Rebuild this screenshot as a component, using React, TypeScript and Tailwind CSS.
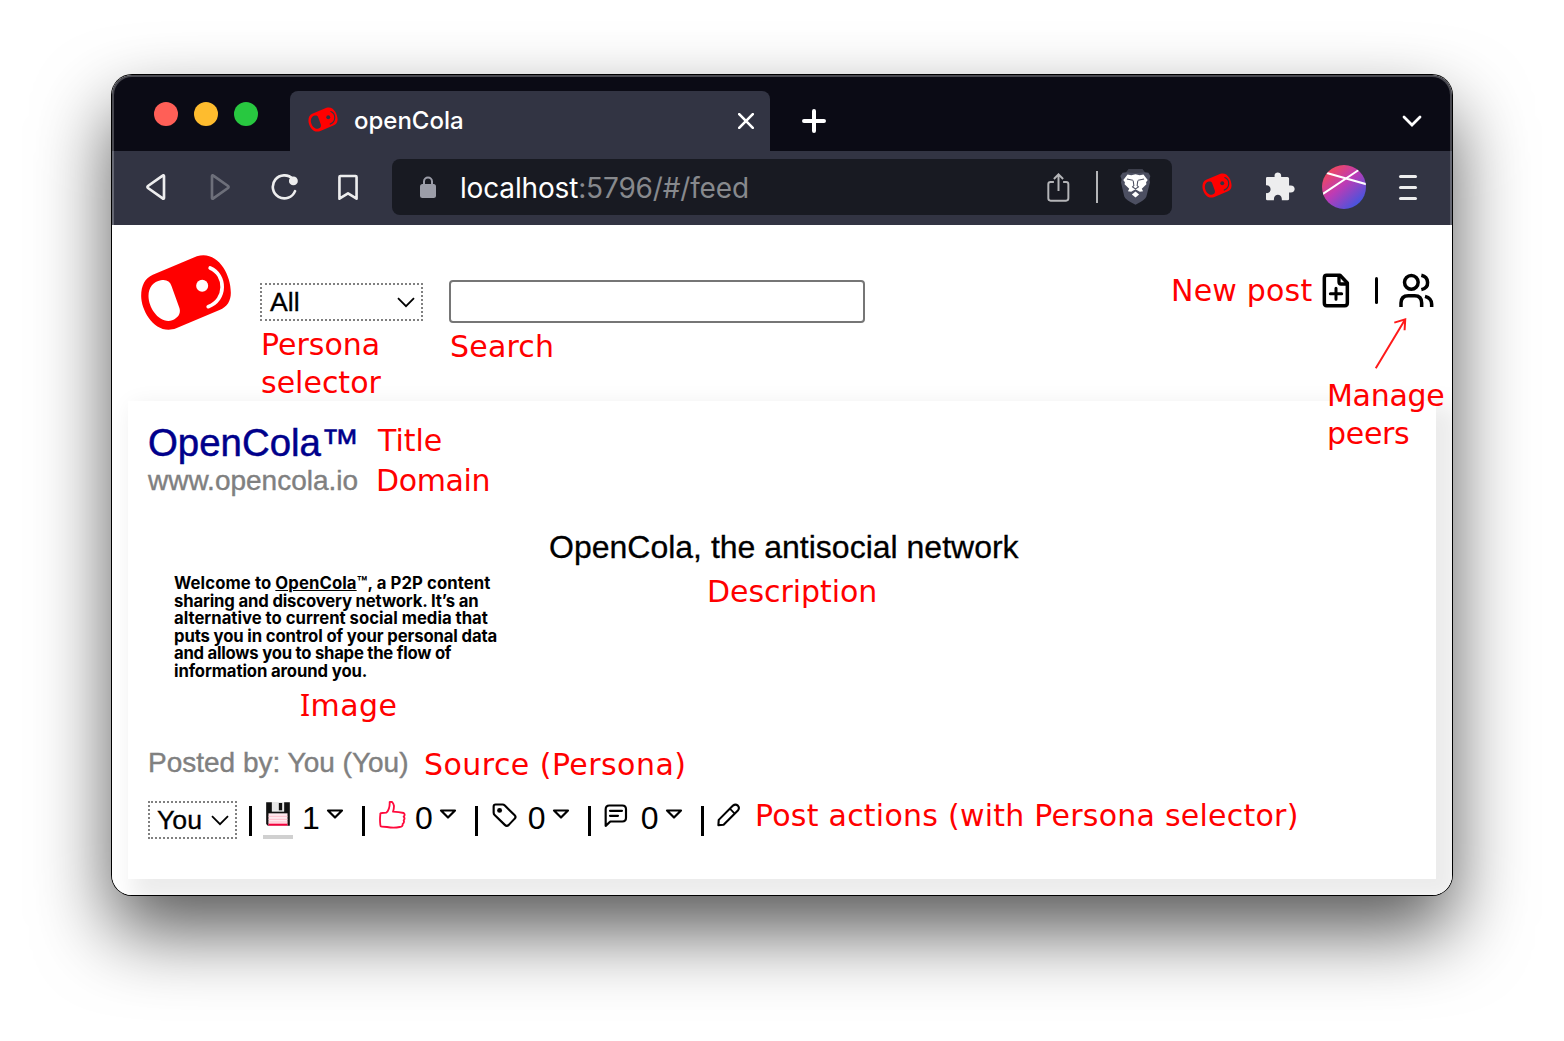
import React from "react";

const SANS = "font-['Liberation_Sans',Arial,sans-serif]";

function CanLogo({ className, hole }: { className: string; hole: string }) {
  return (
    <svg viewBox="60 42 275 231" className={className} aria-label="openCola">
      <path
        d="M98 104L230 49C290 30 332 100 332 158C332 182 322 200 298 210L168 265C108 288 63 215 63 168C63 135 75 114 98 104Z"
        fill="#f00"
      />
      <path
        d="M122 121C139 118 149 124 154 138L178 205C183 222 172 235 156 241C118 252 85 205 85 168C85 142 100 125 122 121Z"
        fill={hole}
      />
      <circle cx="246" cy="137" r="18" fill={hole} />
      <path d="M270 84C318 104 320 180 264 200" fill="none" stroke={hole} strokeWidth="11" strokeLinecap="round" />
    </svg>
  );
}

function Note({ className, children }: { className: string; children: React.ReactNode }) {
  return (
    <div
      className={`absolute whitespace-pre font-['DejaVu_Sans',sans-serif] text-[30px] leading-[38px] text-[#ff0000] ${className}`}
    >
      {children}
    </div>
  );
}

function TabStrip() {
  return (
    <div className="flex h-[76px] items-end bg-[#0b0b15]">
      <div className="mb-[25px] ml-[42px] flex gap-4">
        <span className="size-6 rounded-full bg-[#ff5f57]" />
        <span className="size-6 rounded-full bg-[#febc2e]" />
        <span className="size-6 rounded-full bg-[#28c840]" />
      </div>
      <div className="ml-8 flex h-[60px] w-[480px] items-center rounded-t-lg bg-[#323443] pl-[18px] pr-4">
        <CanLogo className="mt-[-3px] h-[25px] w-[30px]" hole="#323443" />
        <span className="ml-4 font-['Inter',sans-serif] text-[24px] font-medium text-white">openCola</span>
        <svg viewBox="0 0 16 16" className="ml-auto size-4">
          <path d="M1.2 1.2L14.8 14.8M14.8 1.2L1.2 14.8" stroke="#fff" strokeWidth="2.6" strokeLinecap="round" />
        </svg>
      </div>
      <svg viewBox="0 0 24 24" className="mb-[18px] ml-8 size-6">
        <path d="M12 2V22M2 12H22" stroke="#fff" strokeWidth="4" strokeLinecap="round" />
      </svg>
      <svg viewBox="0 0 20 12" className="mb-6 ml-auto mr-[30px] h-3 w-5">
        <path d="M2 2L10 10L18 2" fill="none" stroke="#fff" strokeWidth="2.8" strokeLinecap="round" />
      </svg>
    </div>
  );
}

function LionIcon() {
  return (
    <svg viewBox="301 267 92 109" className="ml-[22px] h-[36px] w-[31px]">
      <path
        d="M327 267H367L375 277L386 278L392 288L389 299L391 307L380 350Q377 360 347 375Q316 360 313 350L303 307L305 299L301 288L308 278L319 277Z"
        fill="#4c4f61"
      />
      <path d="M327 267H367L375 277L347 280L319 277Z" fill="#3d3f4c" />
      <path
        d="M323 284L334 286L347 283L360 286L371 284L384 300L379 307L380 313L366 327L370 334L360 336L347 328L334 336L324 334L328 327L314 313L315 307L310 300Z"
        fill="#fff"
      />
      <path d="M336 344L347 335L358 344L347 353Z" fill="#fff" />
      <path d="M321 297L339 301M373 297L355 301M340 302L342 317L338 321L347 327L356 321L352 317L354 302" fill="none" stroke="#4c4f61" strokeWidth="3.2" />
    </svg>
  );
}

function Toolbar() {
  return (
    <div className="flex h-[74px] items-center bg-[#323443] pb-0.5 pl-[34px]">
      <svg viewBox="140 342 60 78" className="h-[26px] w-5">
        <path d="M190 347Q194 344 194 349V413Q194 418 190 415L146 384Q143 381 146 378Z" fill="none" stroke="#ededee" strokeWidth="8" />
      </svg>
      <svg viewBox="332 342 60 78" className="ml-11 h-[26px] w-5">
        <path d="M342 347Q338 344 338 349V413Q338 418 342 415L386 384Q389 381 386 378Z" fill="none" stroke="#6d6f7a" strokeWidth="8" />
      </svg>
      <svg viewBox="511 340 86 82" className="ml-10 h-[27px] w-[29px]">
        <path d="M579 355A35 35 0 1 0 586 392" fill="none" stroke="#ededee" strokeWidth="8" strokeLinecap="round" />
        <circle cx="581" cy="361" r="13.500" fill="#ededee" />
      </svg>
      <svg viewBox="711 340 66 82" className="ml-[38px] h-[27px] w-[22px]">
        <path d="M721 346H767Q770 346 770 349V415L744 399L718 415V349Q718 346 721 346Z" fill="none" stroke="#ededee" strokeWidth="8" strokeLinejoin="round" />
      </svg>
      <div className="ml-[33px] flex h-14 w-[780px] items-center rounded-lg bg-[#181a22] pl-7">
        <svg viewBox="0 0 16 22" className="h-[22px] w-4">
          <rect x="0" y="8" width="16" height="14" rx="2.500" fill="#9b9da8" />
          <path d="M4 9V5.500a4 4 0 0 1 8 0V9" fill="none" stroke="#9b9da8" strokeWidth="2" />
        </svg>
        <span className="ml-6 mt-px font-['Inter',sans-serif] text-[28px] leading-9 tracking-[-0.160px] text-white">
          localhost<span className="text-[#87898d]">:5796/#/feed</span>
        </span>
        <svg viewBox="79 279 70 88" className="ml-auto h-[29px] w-[23px]">
          <path d="M100 306H90Q83 306 83 313V356Q83 363 90 363H137Q144 363 144 356V313Q144 306 137 306H128" fill="none" stroke="#b4b5b8" strokeWidth="6" />
          <path d="M114 334V284M100 297L114 283L128 297" fill="none" stroke="#b4b5b8" strokeWidth="6" />
        </svg>
        <span className="ml-[26px] h-8 w-0.5 bg-[#b4b5b8]" />
        <LionIcon />
        <span className="w-[21px]" />
      </div>
      <CanLogo className="ml-[30px] mt-[-3px] h-[25px] w-[30px]" hole="#323443" />
      <svg viewBox="738 275 88 88" className="ml-[34px] mt-[-1px] size-[29px]">
        <path
          d="M738 293Q738 290 742 290H764V287C762 273 785 273 784 287V290H803Q808 290 808 295V316H813C829 316 829 337 813 337H808V357Q808 361 803 361H786V357C785 340 763 340 762 357V361H742Q738 361 738 357V339C756 342 757 314 738 315Z"
          fill="#ededee"
        />
      </svg>
      <svg viewBox="906 255 132 132" className="ml-[27px] size-11">
        <defs>
          <linearGradient id="avatar" x1="0.150" y1="0.100" x2="0.850" y2="0.900">
            <stop offset="0" stopColor="#f2495c" />
            <stop offset="0.450" stopColor="#bd3bb5" />
            <stop offset="1" stopColor="#3f56e0" />
          </linearGradient>
          <clipPath id="disc"><circle cx="972" cy="321" r="66" /></clipPath>
        </defs>
        <circle cx="972" cy="321" r="66" fill="url(#avatar)" />
        <path d="M918 278L1040 313M904 345L1016 270" stroke="#fff" strokeWidth="6" clipPath="url(#disc)" />
      </svg>
      <div className="ml-[33px] flex w-[18px] flex-col gap-2">
        <span className="h-[3px] rounded-full bg-[#ededee]" />
        <span className="h-[3px] rounded-full bg-[#ededee]" />
        <span className="h-[3px] rounded-full bg-[#ededee]" />
      </div>
    </div>
  );
}

function Picker({ label, className }: { label: string; className: string }) {
  return (
    <div className={`flex h-[38px] shrink-0 items-center justify-between border-2 border-dotted border-[#808080] text-[26.67px] text-black ${className}`}>
      <span className="[-webkit-text-stroke:0.3px_#000]">{label}</span>
      <svg viewBox="0 0 18 11" className="h-[11px] w-[18px]">
        <path d="M1 1.200L9 9.200L17 1.200" fill="none" stroke="#000" strokeWidth="1.800" />
      </svg>
    </div>
  );
}

function Header() {
  return (
    <div className="flex h-[176px] items-start pl-7 pr-[18px]">
      <CanLogo className="mt-[29px] h-[77px] w-[92px]" hole="#fff" />
      <Picker label="All" className="ml-7 mt-[58px] w-[163px] pl-2 pr-[6px]" />
      <div className="ml-[26px] mt-[55px] h-[43px] w-[416px] rounded-[4px] border-2 border-[#767676] bg-white" />
      <div className="ml-auto mt-12 flex items-center">
        <svg viewBox="486 70 84 105" className="h-[35px] w-7">
          <path d="M500 77H540L562 100V160Q562 168 554 168H500Q493 168 493 160V85Q493 77 500 77Z" fill="none" stroke="#000" strokeWidth="10.500" strokeLinejoin="round" />
          <path d="M537 77V97Q537 103 543 103H562" fill="none" stroke="#000" strokeWidth="10" />
          <path d="M528 116V149M511 132H545" stroke="#000" strokeWidth="9" strokeLinecap="round" />
        </svg>
        <span className="ml-[25px] h-[27px] w-[3px] rounded-full bg-black" />
        <svg viewBox="716 70 105 105" className="ml-[21px] size-[35px]">
          <g fill="none" stroke="#000" strokeWidth="10.500">
            <circle cx="753" cy="98" r="20.500" />
            <path d="M722 172V160Q722 138 744 138H763Q784 138 784 160V172" />
            <path d="M783 77C806 82 810 114 783 120" />
            <path d="M794 140Q814 145 814 164V172" />
          </g>
        </svg>
      </div>
    </div>
  );
}

function Caret() {
  return (
    <svg viewBox="588 206 54 32" className="h-[11px] w-[18px]">
      <path d="M594 210H636L615 231Z" fill="none" stroke="#000" strokeWidth="6.500" strokeLinejoin="round" />
    </svg>
  );
}

function Action({ icon, count }: { icon: React.ReactNode; count: string }) {
  return (
    <div className="flex h-[38px] w-[112.900px] shrink-0 items-start">
      <span className="mt-[5px] h-[30px] w-[3px] bg-black" />
      <span className="ml-[11px] flex w-[30px] justify-center">{icon}</span>
      <span className="ml-[9px] w-[18px] text-[32px] leading-[35px] text-black">{count}</span>
      <span className="ml-[6px] mt-[8px]"><Caret /></span>
    </div>
  );
}

function Disk() {
  return (
    <span className="flex h-[38px] w-[30px] flex-col items-center justify-between border-b-4 border-[#d0d0d0]">
      <svg viewBox="410 185 71 72" className="mt-px h-6 w-6">
        <path d="M410 186H481V256H415L410 251Z" fill="#111" />
        <rect x="427" y="185" width="37" height="29" fill="#e8e8e8" />
        <rect x="448" y="188" width="10" height="22" fill="#111" />
        <rect x="417" y="219" width="57" height="37" fill="#ffe9ee" />
        <path d="M417 228H474M417 237H474M417 245H474" stroke="#ffb6c4" strokeWidth="2.500" />
        <rect x="417" y="250" width="57" height="6" fill="#f5003d" />
      </svg>
    </span>
  );
}

function Thumb() {
  return (
    <svg viewBox="746 181 81 84" className="ml-[3px] h-7 w-[27px] shrink-0">
      <path
        d="M750 221Q749 217 754 217L768 216Q779 206 778 184Q788 180 791 196Q791 204 788 213Q806 214 820 217Q826 222 820 228Q825 234 820 239Q823 246 817 250Q818 258 808 259Q790 263 770 259L754 258Q750 258 750 253Q748 238 750 221Z"
        fill="none" stroke="#ff0a3c" strokeWidth="5.500" strokeLinejoin="round"
      />
    </svg>
  );
}

function Tag() {
  return (
    <svg viewBox="96 187 76 75" className="ml-[2px] mt-0.5 h-[25px] w-[25px]">
      <path d="M107 191H128Q132 191 135 194L165 224Q170 229 165 234L147 253Q141 259 135 253L104 223Q101 220 101 215V197Q101 191 107 191Z" fill="none" stroke="#000" strokeWidth="6.500" strokeLinejoin="round" />
      <circle cx="119" cy="209" r="7.500" fill="#000" />
    </svg>
  );
}

function Comment() {
  return (
    <svg viewBox="432 191 72 71" className="mr-px mt-[3px] h-6 w-6">
      <path d="M437 256V206Q437 195 448 195H487Q498 195 498 206V232Q498 243 487 243H451Z" fill="none" stroke="#000" strokeWidth="6.500" strokeLinejoin="round" />
      <path d="M450 211H486M450 226H474" stroke="#000" strokeWidth="6.500" strokeLinecap="round" />
    </svg>
  );
}

function Card() {
  return (
    <div className="mx-4 flex h-[478px] flex-col items-start bg-white pl-5 pt-5 shadow-[13px_13px_22px_9px_#ececec]">
      <div className="text-[38.400px] leading-[44px] text-[#00008b] [-webkit-text-stroke:0.5px_#00008b]">OpenCola™</div>
      <div className="text-[28px] leading-8 text-[#808080] [-webkit-text-stroke:0.4px_#808080]">www.opencola.io</div>
      <div className="flex h-[250px] items-start">
        <div className="ml-[26px] mt-[78px] w-[375px] whitespace-pre font-['Inter',sans-serif] text-[16.700px] font-bold leading-[17.600px] text-black">
          <div className="tracking-[0.100px]">Welcome to <span className="underline">OpenCola</span>™, a P2P content</div>
          <div className="tracking-[-0.160px]">sharing and discovery network. It’s an</div>
          <div className="tracking-[0px]">alternative to current social media that</div>
          <div className="tracking-[-0.130px]">puts you in control of your personal data</div>
          <div className="tracking-[-0.240px]">and allows you to shape the flow of</div>
          <div className="tracking-[-0.120px]">information around you.</div>
        </div>
        <div className="mt-8 text-[32px] leading-[37px] text-black [-webkit-text-stroke:0.3px_#000]">OpenCola, the antisocial network</div>
      </div>
      <div className="text-[28px] leading-8 text-[#808080] [-webkit-text-stroke:0.4px_#808080]">Posted by: You (You)</div>
      <div className="mt-[22px] flex h-[38px] items-start">
        <Picker label="You" className="w-[89px] pl-[7px] pr-[6px]" />
        <div className="ml-3 flex">
          <Action icon={<Disk />} count="1" />
          <Action icon={<Thumb />} count="0" />
          <Action icon={<Tag />} count="0" />
          <Action icon={<Comment />} count="0" />
          <span className="mt-[5px] h-[30px] w-[3px] bg-black" />
          <svg viewBox="771 190 69 68" className="ml-[13px] mt-0.5 size-6">
            <path d="M775 253L776 238L817 197Q824 191 831 197Q837 204 831 211L790 252Z" fill="none" stroke="#000" strokeWidth="6" strokeLinejoin="round" />
            <path d="M808 206L822 220" stroke="#000" strokeWidth="5" />
          </svg>
        </div>
      </div>
    </div>
  );
}

export default function App() {
  return (
    <div className="relative h-[1041px] w-[1564px] overflow-hidden bg-white pl-28 pt-[75px]">
      <div className="w-[1340px] rounded-[20px] shadow-[0_0_0_1px_#000,0_36px_76px_rgba(0,0,0,0.660)]">
        <div className={`relative h-[820px] overflow-hidden rounded-[20px] bg-white ${SANS}`}>
          <TabStrip />
          <Toolbar />
          <Header />
          <Card />
          <div className="pointer-events-none absolute inset-x-0 top-0 h-[150px] rounded-t-[20px] border-x-2 border-t-2 border-white/25" />
        </div>
      </div>

      <Note className="left-[261px] top-[326px]">{"Persona\nselector"}</Note>
      <Note className="left-[450px] top-[328px] tracking-[0.200px]">Search</Note>
      <Note className="left-[1171px] top-[272px] tracking-[0.200px]">New post</Note>
      <Note className="left-[1327px] top-[377px] tracking-[-0.300px]">{"Manage\npeers"}</Note>
      <Note className="left-[378px] top-[422px]">Title</Note>
      <Note className="left-[376px] top-[462px] tracking-[-0.400px]">Domain</Note>
      <Note className="left-[707px] top-[573px] tracking-[-0.050px]">Description</Note>
      <Note className="left-[300px] top-[686px] tracking-[0.400px]"><span className="font-['Noto_Sans',sans-serif]">I</span>mage</Note>
      <Note className="left-[424px] top-[746px] tracking-[0.450px]">Source (Persona)</Note>
      <Note className="left-[755px] top-[797px] tracking-[0.240px]">Post actions (with Persona selector)</Note>
      <svg viewBox="640 200 105 160" className="absolute left-[1373px] top-[317px] h-[53px] w-[35px]">
        <path d="M648 355L737 207M704 217L737 207L735 240" fill="none" stroke="#ff1a1a" strokeWidth="6" />
      </svg>
    </div>
  );
}
